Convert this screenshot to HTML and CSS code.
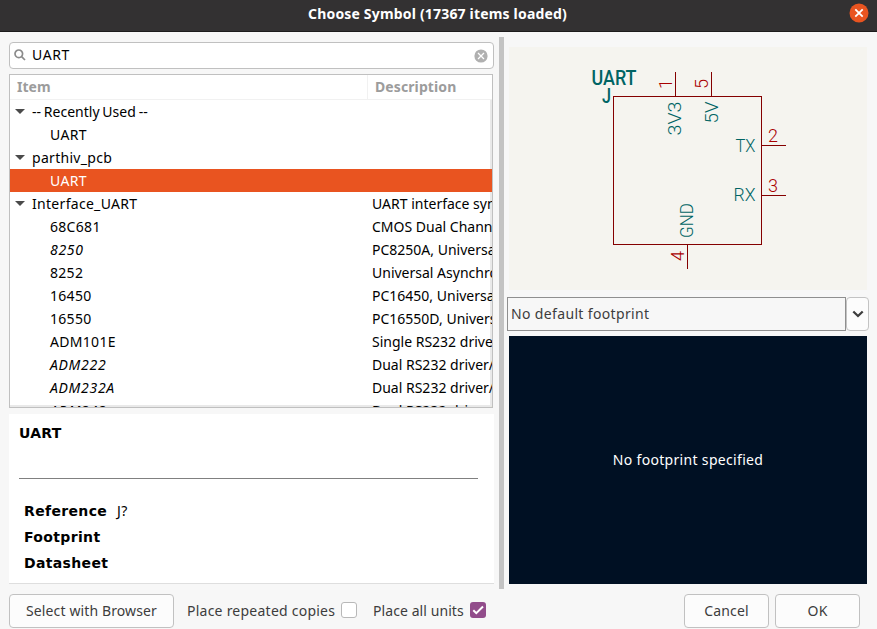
FILE: index.html
```html
<!DOCTYPE html>
<html lang="en">
<head>
<meta charset="utf-8">
<title>Choose Symbol</title>
<link rel="stylesheet" href="styles.css">
</head>
<body>
<div class="window">
  <header class="titlebar">
    <h1 class="title"><span>Choose Symbol (17367 items loaded)</span></h1>
    <svg class="close" viewBox="0 0 20 20"><circle cx="10" cy="10" r="9.5"/><path d="M6.3 6.3l7.4 7.4M13.7 6.3l-7.4 7.4"/></svg>
  </header>
  <main class="content">
    <section class="left">
      <div class="search">
        <svg class="lens" viewBox="0 0 12 12"><circle cx="4.8" cy="4.8" r="3.8"/><path d="M7.6 7.6l3.4 3.4"/></svg>
        <span class="query">UART</span>
        <svg class="clear" viewBox="0 0 14 14"><circle cx="7" cy="7" r="6.6"/><path d="M4 4l6 6M10 4l-6 6"/></svg>
      </div>
      <div class="tree">
        <div class="head"><span class="h-item">Item</span><span class="h-desc">Description</span></div>
        <div class="rows">
          <div class="row group"><i class="arrow"></i><span class="name recent">-- Recently Used --</span></div>
          <div class="row"><span class="name">UART</span></div>
          <div class="row group"><i class="arrow"></i><span class="name">parthiv_pcb</span></div>
          <div class="row selected"><span class="name">UART</span></div>
          <div class="row group"><i class="arrow"></i><span class="name">Interface_UART</span><span class="desc">UART interface symbols</span></div>
          <div class="row"><span class="name">68C681</span><span class="desc">CMOS Dual Channel UART</span></div>
          <div class="row"><span class="name alias">8250</span><span class="desc">PC8250A, Universal Asynchronous</span></div>
          <div class="row"><span class="name">8252</span><span class="desc">Universal Asynchronous</span></div>
          <div class="row"><span class="name">16450</span><span class="desc">PC16450, Universal Asynchronous</span></div>
          <div class="row"><span class="name">16550</span><span class="desc">PC16550D, Universal Asynchronous</span></div>
          <div class="row"><span class="name">ADM101E</span><span class="desc">Single RS232 driver/receiver</span></div>
          <div class="row"><span class="name alias">ADM222</span><span class="desc">Dual RS232 driver/receiver</span></div>
          <div class="row"><span class="name alias">ADM232A</span><span class="desc">Dual RS232 driver/receiver</span></div>
          <div class="row"><span class="name alias">ADM242</span><span class="desc">Dual RS232 driver/receiver</span></div>
        </div>
      </div>
      <div class="details">
        <h2 class="d-title">UART</h2>
        <hr class="rule">
        <dl class="fields">
          <dt>Reference</dt><dd>J?</dd>
          <dt>Footprint</dt><dd></dd>
          <dt>Datasheet</dt><dd></dd>
        </dl>
      </div>
    </section>
    <div class="splitter"></div>
    <section class="right">
      <svg class="symbol" width="358" height="243" viewBox="0 0 358 243">
        <g class="outline">
          <rect x="104.5" y="49.5" width="148" height="148"/>
          <path d="M166.5 25v24M202.5 25v24M253 98.5h24M253 148.5h24M178.5 198v24"/>
        </g>
        <g class="label strong">
          <text x="82.500" y="38" textLength="45" lengthAdjust="spacingAndGlyphs">UART</text>
          <text x="93" y="55.500" textLength="9" lengthAdjust="spacingAndGlyphs">J</text>
        </g>
        <g class="label">
          <text transform="translate(172 88.500) rotate(-90)" textLength="34" lengthAdjust="spacingAndGlyphs">3V3</text>
          <text transform="translate(209 76.500) rotate(-90)" textLength="22" lengthAdjust="spacingAndGlyphs">5V</text>
          <text x="226.500" y="105" textLength="20" lengthAdjust="spacingAndGlyphs">TX</text>
          <text x="224.500" y="154" textLength="22" lengthAdjust="spacingAndGlyphs">RX</text>
          <text transform="translate(184 191) rotate(-90)" textLength="35" lengthAdjust="spacingAndGlyphs">GND</text>
        </g>
        <g class="label number">
          <text transform="translate(163 42) rotate(-90)">1</text>
          <text transform="translate(199 42) rotate(-90)">5</text>
          <text x="259" y="95">2</text>
          <text x="259" y="144.500">3</text>
          <text transform="translate(175 214) rotate(-90)">4</text>
        </g>
      </svg>
      <div class="combo">
        <div class="combo-text"><span>No default footprint</span></div>
        <div class="combo-btn"><svg viewBox="0 0 12 8"><path d="M1.3 1.5L6 6l4.700-4.500"/></svg></div>
      </div>
      <div class="footprint"><span>No footprint specified</span></div>
    </section>
  </main>
  <footer class="actions">
    <button class="btn browser"><span>Select with Browser</span></button>
    <label class="check repeat"><span>Place repeated copies</span><i class="box"></i></label>
    <label class="check units"><span>Place all units</span><i class="box on"><svg viewBox="0 0 16 16"><path d="M3.300 8.200l3 3L13 4.500"/></svg></i></label>
    <button class="btn cancel"><span>Cancel</span></button>
    <button class="btn ok"><span>OK</span></button>
  </footer>
</div>
</body>
</html>
```

FILE: styles.css
```css
* { box-sizing: border-box; }
body {
  margin: 0;
  overflow: hidden;
  background: #f7f7f7;
  color: #000;
  font: 14px/23px "Noto Sans", sans-serif;
}
svg { display: block; fill: none; }
.window { width: 877px; height: 629px; display: flex; flex-direction: column; }

.titlebar {
  flex: none;
  height: 32px;
  display: grid;
  grid-template-columns: 1fr 20px;
  padding: 3px 8px 0 28px;
  background: #333132;
  border-bottom: 1px solid #1d1b1c;
}
.title { margin: 0 0 0 -2px; text-align: center; color: #fff; font-size: 14px; line-height: 21px; font-weight: 700; letter-spacing: .18px; }
.close { width: 20px; height: 20px; }
.close circle { fill: #e95420; }
.close path { stroke: #fff; stroke-width: 1.8; }

.content { flex: none; height: 557px; display: flex; padding: 5px 8px 0 9px; }
.left { width: 485px; padding-top: 5px; display: flex; flex-direction: column; }
.search {
  height: 27px;
  display: flex;
  align-items: center;
  padding: 0 5px 0 4px;
  background: #fff;
  border: 1px solid #c0c0c0;
  border-radius: 4px;
}
.lens { width: 12px; height: 12px; margin-top: -2px; stroke: #8b8b8b; stroke-width: 1.7; }
.query { flex: 1; margin: -2px 0 0 6px; letter-spacing: .6px; }
.clear { width: 14px; height: 14px; }
.clear circle { fill: #b0b0b0; }
.clear path { stroke: #fff; stroke-width: 1.3; }

.tree { width: 484px; height: 334px; margin-top: 5px; background: #fff; border: 1px solid #c0c0c0; overflow: hidden; display: flex; flex-direction: column; }
.head { height: 25px; flex: none; display: flex; color: #9c9c9c; font-weight: 700; border-bottom: 1px solid #f1f1f1; }
.h-item { width: 358px; padding-left: 7px; border-right: 1px solid #f1f1f1; }
.h-desc { padding-left: 7px; letter-spacing: .1px; }
.rows { flex: 1; overflow: hidden; box-shadow: inset -2px -2px #e9e9e9; }
.row { display: grid; grid-template-columns: 322px max-content; height: 23px; padding-left: 40px; white-space: nowrap; }
.row.group { grid-template-columns: 17px 340px max-content; padding-left: 5px; }
.name { letter-spacing: .3px; }
.recent { letter-spacing: 0; word-spacing: -.8px; }
.arrow { align-self: center; width: 10px; height: 5px; background: #4a4a4a; clip-path: polygon(0 0, 100% 0, 50% 100%); }
.selected { background: #e95420; color: #fff; }
.alias { font-style: italic; letter-spacing: .7px; }

.details { height: 170px; margin-top: 6px; padding: 7px 16px 0 10px; background: #fff; border-bottom: 1px solid #dedede; font-family: "DejaVu Sans", sans-serif; }
.d-title { margin: 0; font-size: 14px; line-height: 24px; letter-spacing: .3px; }
.rule { height: 1px; margin: 33px 0 0; border: 0; background: #808080; }
.fields { display: grid; grid-template-columns: 93px 1fr; grid-auto-rows: 26px; line-height: 26px; margin: 19px 0 0 5px; }
.fields dt { font-weight: 700; letter-spacing: .35px; }
.fields dd { margin: 0; font-family: "Noto Sans", sans-serif; letter-spacing: .4px; }

.splitter { width: 5px; height: 552px; margin-left: 5px; background: #c3c3c3; }
.right { width: 362px; margin-left: 3px; padding-top: 10px; }
.symbol { margin-left: 2px; background: #f5f4ef; }
.outline { stroke: #840000; shape-rendering: crispEdges; }
.label { fill: #006464; font: 300 18px Roboto, sans-serif; }
.label.strong { font-weight: 500; font-size: 20px; }
.label.number { fill: #a90000; }
.combo { height: 34px; display: flex; margin-top: 7px; color: #3d3d3d; letter-spacing: .35px; }
.combo-text { width: 339px; padding-left: 3px; line-height: 31px; border: 1px solid #8f8f8f; }
.combo-btn { width: 23px; display: grid; place-items: center; background: #fcfcfc; border: 1px solid #c3c3c3; border-radius: 4px; }
.combo-btn svg { width: 12px; height: 8px; stroke: #3d3d3d; stroke-width: 2.3; }
.footprint { width: 358px; height: 248px; margin: 5px 0 0 2px; padding-bottom: 2px; display: grid; place-items: center; background: #001023; color: #fff; letter-spacing: .32px; }

.actions { flex: none; height: 40px; display: flex; align-items: flex-start; padding: 5px 17px 0 9px; color: #3d3d3d; }
.btn { height: 34px; padding: 0 0 2px; font: inherit; color: inherit; letter-spacing: .12px; background: #fcfcfc; border: 1px solid #c1c1c1; border-radius: 4px; }
.browser { width: 165px; }
.cancel { width: 85px; margin-left: auto; }
.ok { width: 85px; margin-left: 6px; }
.check { height: 32px; display: flex; align-items: center; justify-content: space-between; white-space: nowrap; }
.repeat { width: 170px; margin-left: 13px; letter-spacing: .24px; }
.units { width: 113px; margin-left: 16px; letter-spacing: .08px; }
.box { width: 16px; height: 16px; background: #fff; border: 1px solid #b8b8b8; border-radius: 3px; }
.box.on { background: #924d8b; border: 0; }
.box path { stroke: #fff; stroke-width: 2; }
```
